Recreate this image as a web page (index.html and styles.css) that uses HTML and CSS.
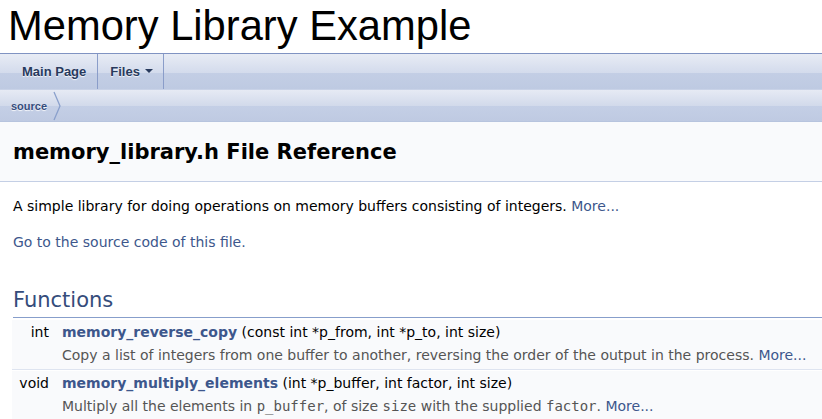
FILE: index.html
```
<!DOCTYPE html>
<html>
<head>
<meta charset="utf-8">
<link rel="stylesheet" href="styles.css">
</head>
<body>
<div class="projectname">Memory Library Example</div>
<nav class="mainnav">
  <a class="tab" href="#">Main Page</a>
  <a class="tab" href="#">Files <span class="caret"></span></a>
</nav>
<div class="navpath">
  <span class="crumb">source</span>
  <svg class="chev" width="9" height="30" viewBox="0 0 9 30"><path d="M1 1 L7 15 L1 29" fill="none" stroke="#8AA0CC" stroke-width="1.3"/></svg>
</div>
<div class="header">
  <div class="title">memory_library.h File Reference</div>
</div>
<div class="contents">
  <p class="brief">A simple library for doing operations on memory buffers consisting of integers. <a href="#">More...</a></p>
  <p class="srclink"><a href="#">Go to the source code of this file.</a></p>
  <h2 class="groupheader">Functions</h2>
  <div class="memberdecls">
    <div class="item">
      <div class="left">int</div>
      <div class="right"><a class="fn" href="#">memory_reverse_copy</a> (const int *p_from, int *p_to, int size)</div>
      <div class="left"></div>
      <div class="desc">Copy a list of integers from one buffer to another, reversing the order of the output in the process. <a href="#">More...</a></div>
    </div>
    <div class="sep"></div>
    <div class="item">
      <div class="left">void</div>
      <div class="right"><a class="fn" href="#">memory_multiply_elements</a> (int *p_buffer, int factor, int size)</div>
      <div class="left"></div>
      <div class="desc">Multiply all the elements in <code>p_buffer</code>, of size <code>size</code> with the supplied <code>factor</code>. <a href="#">More...</a></div>
    </div>
  </div>
</div>
</body>
</html>
```
FILE: styles.css
```
html, body {
  margin: 0;
  padding: 0;
  background: #fff;
}
body {
  font-family: "DejaVu Sans", sans-serif;
  font-size: 14px;
  color: #000;
}
a {
  color: #3D578C;
  text-decoration: none;
}
.projectname {
  font-family: "Liberation Sans", Arial, sans-serif;
  font-size: 41.7px;
  line-height: 51px;
  height: 53px;
  padding-left: 8px;
  box-sizing: border-box;
}
.mainnav {
  display: flex;
  height: 36px;
  box-sizing: border-box;
  border-top: 1px solid #8093C2;
  background: linear-gradient(to bottom, #E8ECF5 0%, #D3DBEC 54%, #C3CEE5 55%, #BECAE2 100%);
  font-family: "Liberation Sans", Arial, sans-serif;
  font-weight: bold;
  font-size: 13px;
}
.tab {
  display: flex;
  align-items: center;
  color: #283A5D;
  text-shadow: 0 1px 1px rgba(255,255,255,0.9);
  border-right: 1px solid #8A9DC9;
}
.tab:first-child {
  padding: 0 11px 0 22px;
}
.tab:nth-child(2) {
  padding: 0 10px 0 12px;
}
.caret {
  display: inline-block;
  width: 0;
  height: 0;
  margin-left: 5px;
  border-left: 4px solid transparent;
  border-right: 4px solid transparent;
  border-top: 4px solid #283A5D;
  position: relative;
  top: -1px;
}
.navpath {
  display: flex;
  align-items: stretch;
  height: 33px;
  box-sizing: border-box;
  border-top: 1px solid #C8D2E7;
  border-bottom: 1px solid #B7C4DE;
  background: linear-gradient(to bottom, #E6EAF4 0%, #D2DAEB 50%, #C4CFE6 51%, #BFCAE2 100%);
  font-family: "Liberation Sans", Arial, sans-serif;
  font-weight: bold;
  font-size: 11px;
}
.crumb {
  display: flex;
  align-items: center;
  padding-left: 11px;
  padding-right: 6px;
  color: #364D7C;
  text-shadow: 0 1px 1px rgba(255,255,255,0.9);
}
.chev {
  align-self: center;
}
.header {
  background: #F9FAFC;
  border-bottom: 1px solid #C4CFE5;
  height: 60px;
  box-sizing: border-box;
  display: flex;
  align-items: center;
  padding-left: 13px;
}
.title {
  font-weight: bold;
  font-size: 21px;
}
.contents {
  margin: 0 0 0 13px;
}
.brief {
  margin: 14px 0 0 0;
  line-height: 20px;
}
.srclink {
  margin: 16px 0 0 0;
  line-height: 20px;
}
.groupheader {
  margin: 35px 0 0 0;
  font-size: 21px;
  font-weight: normal;
  color: #354C7B;
  line-height: 26px;
  padding-bottom: 4px;
  border-bottom: 1px solid #879ECB;
}
.memberdecls {
  margin-top: 2px;
  margin-left: -1px;
}
.item {
  display: grid;
  grid-template-columns: 42px 1fr;
  background: #F9FAFC;
}
.left {
  text-align: right;
  padding-right: 5px;
  line-height: 20px;
  padding-top: 2px;
}
.right {
  padding-left: 8px;
  line-height: 20px;
  padding-top: 2px;
}
.item .left:nth-child(3) {
  padding-top: 0;
}
.desc {
  padding: 3px 0 4px 8px;
  color: #555;
  line-height: 20px;
}
.fn {
  font-weight: bold;
}
code {
  font-family: "DejaVu Sans Mono", monospace;
  font-size: 14px;
}
.sep {
  height: 1px;
  border-top: 1px solid #DEE4F0;
  background: #fff;
}
```
